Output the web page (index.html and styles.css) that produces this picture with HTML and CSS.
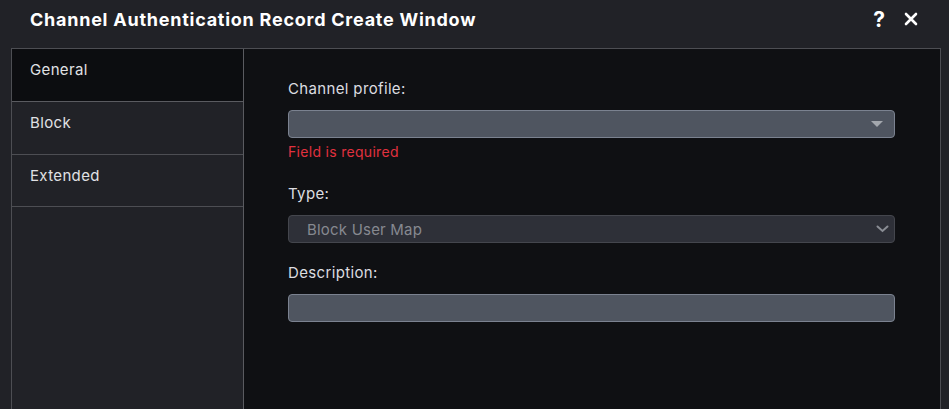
FILE: index.html
```html
<!DOCTYPE html>
<html lang="en">
<head>
    <meta charset="UTF-8">
    <meta name="viewport" content="width=device-width, initial-scale=1.0">
    <title>Channel Authentication Record Create Window</title>
    <link rel="stylesheet" href="styles.css">
</head>
<body>
    <div class="window">
        <header class="title-bar">
            <h1>Channel Authentication Record Create Window</h1>
            <div class="title-actions">
                <span class="help">?</span>
                <svg class="close" width="14" height="14" viewBox="0 0 14 14">
                    <path d="M2 2 L12 12 M12 2 L2 12" stroke="#fff" stroke-width="2.6" stroke-linecap="round"/>
                </svg>
            </div>
        </header>
        <div class="window-body">
            <nav class="tabs">
                <div class="tab active">General</div>
                <div class="tab">Block</div>
                <div class="tab">Extended</div>
            </nav>
            <form class="form">
                <div class="field with-error">
                    <label>Channel profile:</label>
                    <div class="select invalid">
                        <svg class="caret" width="12" height="7" viewBox="0 0 12 7">
                            <path d="M0 0 H12 L6 6 Z" fill="#a3a7ad"/>
                        </svg>
                    </div>
                    <div class="error">Field is required</div>
                </div>
                <div class="field">
                    <label>Type:</label>
                    <div class="select disabled">
                        <span>Block User Map</span>
                        <svg class="chevron" width="13" height="8" viewBox="0 0 13 8">
                            <path d="M1.5 1.5 L6.5 6 L11.5 1.5" fill="none" stroke="#8a8d94" stroke-width="2" stroke-linecap="round"/>
                        </svg>
                    </div>
                </div>
                <div class="field">
                    <label>Description:</label>
                    <div class="input"></div>
                </div>
            </form>
        </div>
    </div>
</body>
</html>
```

FILE: styles.css
```css
body {
    margin: 0;
    padding: 0;
    background-color: #212227;
    font-family: Inter, "Noto Sans", sans-serif;
    color: #dcdde0;
}
.window {
    width: 949px;
    height: 409px;
    display: flex;
    flex-direction: column;
    overflow: hidden;
}
.title-bar {
    height: 48px;
    display: flex;
    align-items: center;
    justify-content: space-between;
    padding: 0 31px 10px 30px;
    box-sizing: border-box;
}
.title-bar h1 {
    margin: 0;
    font-size: 18px;
    font-weight: 700;
    color: #fff;
    letter-spacing: 0.75px;
}
.title-actions {
    display: flex;
    align-items: center;
    gap: 19px;
}
.help {
    font-size: 21px;
    font-weight: 700;
    color: #fff;
}
.close {
    display: block;
}
.window-body {
    flex: 1;
    display: flex;
    margin: 0 8px 0 11px;
    border: 1px solid #4d4e53;
    border-bottom: none;
    background: #0f1013;
}
.tabs {
    width: 231px;
    display: flex;
    flex-direction: column;
    background: #212227;
    border-right: 1px solid #5a5b60;
}
.tab {
    height: 53px;
    padding: 11px 18px 0;
    box-sizing: border-box;
    font-size: 15px;
    letter-spacing: 0.35px;
    color: #e0e1e4;
    border-bottom: 1px solid #4d4e53;
}
.tab:last-child {
    height: 52px;
}
.tab.active {
    background: #0c0d10;
    border-bottom-color: #5a5b60;
}
.form {
    flex: 1;
    padding: 30px 45px 0 44px;
}
.field {
    margin-bottom: 20px;
}
.field.with-error {
    margin-bottom: 24px;
}
.field label {
    display: block;
    font-size: 15px;
    letter-spacing: 0.35px;
    color: #dcdde0;
    margin-bottom: 12px;
}
.select, .input {
    height: 28px;
    box-sizing: border-box;
    border-radius: 4px;
    display: flex;
    align-items: center;
    justify-content: space-between;
    padding: 0 11px 0 18px;
}
.select.invalid, .input {
    background: #4f5560;
    border: 1px solid #7b8290;
}
.select.invalid {
    justify-content: flex-end;
    padding-right: 11px;
}
.select.disabled {
    background: #2e3038;
    border: 1px solid #44464d;
    font-size: 15px;
    letter-spacing: 0.2px;
    color: #868990;
    padding-right: 5px;
}
.error {
    margin-top: 5px;
    font-size: 14px;
    letter-spacing: 0.3px;
    color: #e0313f;
}
```
